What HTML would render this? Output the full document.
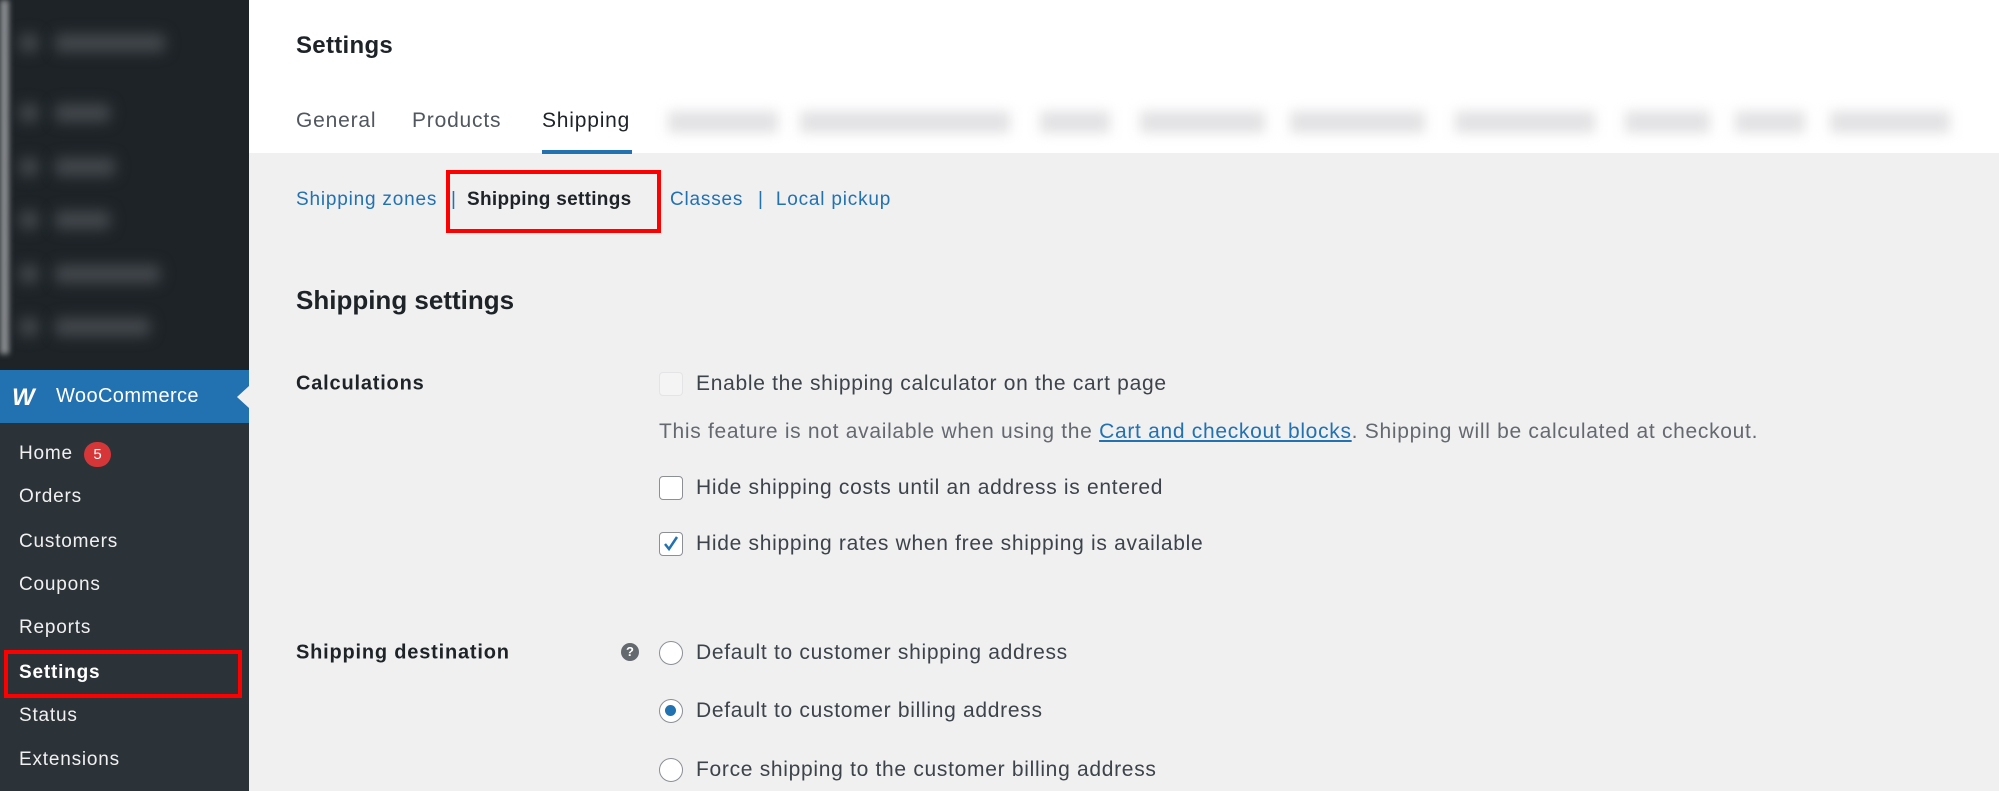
<!DOCTYPE html><html><head><style>
*{margin:0;padding:0;box-sizing:border-box}
body{width:1999px;height:791px;overflow:hidden;background:#f0f0f1;font-family:"Liberation Sans",Arial,sans-serif;position:relative;color:#1d2327}
.a{position:absolute;white-space:nowrap}
.side{position:absolute;left:0;top:0;width:249px;height:791px;background:#2c3338}
.top{position:absolute;left:0;top:0;width:249px;height:370px;background:#1d2327}
.blur{position:absolute;background:#44494e;filter:blur(7px);border-radius:4px}
.woo{position:absolute;left:0;top:370px;width:249px;height:53px;background:#2271b1}
.si{position:absolute;left:19px;font-size:19px;letter-spacing:0.8px;color:#f0f0f1;transform:translateY(-50%)}
.hdr{position:absolute;left:249px;top:0;width:1750px;height:153px;background:#fff}
.tab{font-size:21px;letter-spacing:0.8px;color:#50575e;transform:translateY(-50%)}
.bt{position:absolute;top:111px;height:22px;background:#e2e2e4;filter:blur(6px)}
.lnk{color:#2271b1}
.sub{font-size:19px;letter-spacing:0.8px}
.row{font-size:21px;letter-spacing:0.7px;color:#3c434a;transform:translateY(-50%)}
.cb{position:absolute;width:24px;height:24px;border:1.5px solid #8c8f94;border-radius:4px;background:#fff;transform:translateY(-50%)}
.rb{position:absolute;width:24px;height:24px;border:1.5px solid #8c8f94;border-radius:50%;background:#fff;transform:translateY(-50%)}
.lbl{font-size:20px;letter-spacing:0.8px;font-weight:bold;transform:translateY(-50%)}
</style></head><body>
<div class="side"></div>
<div class="top"></div>
<div style="position:absolute;left:0;top:0;width:9px;height:354px;background:#8a8d90;filter:blur(3px)"></div>
<div class="blur" style="left:20px;top:34px;width:18px;height:18px"></div><div class="blur" style="left:55px;top:34px;width:110px;height:18px"></div>
<div class="blur" style="left:20px;top:104px;width:18px;height:18px"></div><div class="blur" style="left:55px;top:104px;width:55px;height:18px"></div>
<div class="blur" style="left:20px;top:158px;width:18px;height:18px"></div><div class="blur" style="left:55px;top:158px;width:60px;height:18px"></div>
<div class="blur" style="left:20px;top:211px;width:18px;height:18px"></div><div class="blur" style="left:55px;top:211px;width:55px;height:18px"></div>
<div class="blur" style="left:20px;top:265px;width:18px;height:18px"></div><div class="blur" style="left:55px;top:265px;width:105px;height:18px"></div>
<div class="blur" style="left:20px;top:318px;width:18px;height:18px"></div><div class="blur" style="left:55px;top:318px;width:95px;height:18px"></div>
<div class="woo"></div>
<div class="a" style="left:12px;top:384px;font-size:24px;font-weight:900;font-style:italic;color:#fff;letter-spacing:-2px">W</div>
<div class="a" style="left:56px;top:385px;font-size:20px;letter-spacing:0.4px;color:#fff">WooCommerce</div>
<div style="position:absolute;left:237px;top:386px;width:0;height:0;border-top:11px solid transparent;border-bottom:11px solid transparent;border-right:12px solid #f0f0f1"></div>
<div class="si" style="top:454px">Home</div>
<div class="a" style="left:84px;top:442px;width:27px;height:25px;border-radius:13px;background:#d63638;color:#fff;font-size:15px;text-align:center;line-height:25px">5</div>
<div class="si" style="top:497px">Orders</div>
<div class="si" style="top:542px">Customers</div>
<div class="si" style="top:585px">Coupons</div>
<div class="si" style="top:628px">Reports</div>
<div class="si" style="top:673px;font-weight:bold;color:#fff">Settings</div>
<div class="a" style="left:4px;top:650px;width:238px;height:48px;border:4px solid #f00"></div>
<div class="si" style="top:716px">Status</div>
<div class="si" style="top:760px">Extensions</div>

<div class="hdr"></div>
<div class="a" style="left:296px;top:32px;font-size:24px;font-weight:bold;letter-spacing:0.3px">Settings</div>
<div class="a tab" style="left:296px;top:121px">General</div>
<div class="a tab" style="left:412px;top:121px">Products</div>
<div class="a tab" style="left:542px;top:121px;color:#1d2327">Shipping</div>
<div class="a" style="left:542px;top:150px;width:90px;height:4px;background:#2271b1"></div>
<div class="bt" style="left:668px;width:110px"></div><div class="bt" style="left:800px;width:210px"></div><div class="bt" style="left:1040px;width:70px"></div><div class="bt" style="left:1140px;width:125px"></div><div class="bt" style="left:1290px;width:135px"></div><div class="bt" style="left:1455px;width:140px"></div><div class="bt" style="left:1625px;width:85px"></div><div class="bt" style="left:1735px;width:70px"></div><div class="bt" style="left:1830px;width:120px"></div>

<div class="a lnk sub" style="left:296px;top:189px">Shipping zones</div>
<div class="a lnk sub" style="left:451px;top:189px">|</div>
<div class="a sub" style="left:467px;top:189px;font-weight:bold;letter-spacing:0.3px">Shipping settings</div>
<div class="a" style="left:446px;top:170px;width:215px;height:63px;border:4px solid #f00"></div>
<div class="a lnk sub" style="left:670px;top:189px">Classes</div>
<div class="a lnk sub" style="left:758px;top:189px">| &nbsp;Local pickup</div>

<div class="a" style="left:296px;top:285px;font-size:26px;font-weight:bold">Shipping settings</div>
<div class="a lbl" style="left:296px;top:384px">Calculations</div>
<div class="cb" style="left:659px;top:384px;border-color:#e4e4e6;background:#f4f4f5"></div>
<div class="a row" style="left:696px;top:384px">Enable the shipping calculator on the cart page</div>
<div class="a row" style="left:659px;top:432px;color:#646970">This feature is not available when using the <span class="lnk" style="text-decoration:underline">Cart and checkout blocks</span>. Shipping will be calculated at checkout.</div>
<div class="cb" style="left:659px;top:488px"></div>
<div class="a row" style="left:696px;top:488px">Hide shipping costs until an address is entered</div>
<div class="cb" style="left:659px;top:544px"><svg width="22" height="22" viewBox="0 0 22 22" style="position:absolute;left:0;top:0"><path d="M5 11 L9 16 L17 4" fill="none" stroke="#2271b1" stroke-width="2.5"/></svg></div>
<div class="a row" style="left:696px;top:544px">Hide shipping rates when free shipping is available</div>

<div class="a lbl" style="left:296px;top:653px">Shipping destination</div>
<div class="a" style="left:621px;top:643px;width:18px;height:18px;border-radius:50%;background:#646970;color:#fff;font-size:13px;font-weight:bold;text-align:center;line-height:18px">?</div>
<div class="rb" style="left:659px;top:653px"></div>
<div class="a row" style="left:696px;top:653px">Default to customer shipping address</div>
<div class="rb" style="left:659px;top:711px"><div style="position:absolute;left:5px;top:5px;width:11px;height:11px;border-radius:50%;background:#2271b1"></div></div>
<div class="a row" style="left:696px;top:711px">Default to customer billing address</div>
<div class="rb" style="left:659px;top:770px"></div>
<div class="a row" style="left:696px;top:770px">Force shipping to the customer billing address</div>
</body></html>
